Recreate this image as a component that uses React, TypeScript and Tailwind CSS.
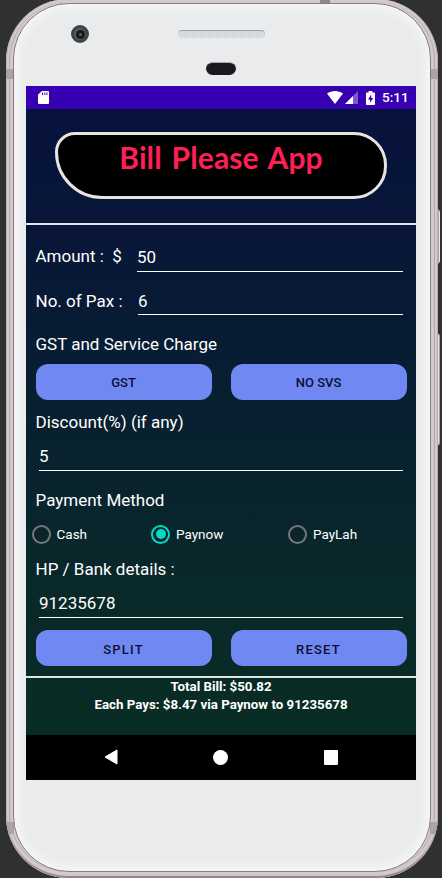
import type { ReactNode } from "react";

function StatusBar() {
  return (
    <div className="flex h-[23px] shrink-0 items-center bg-[#3700b3] pl-3 pr-[8px] text-white">
      <svg width="11" height="13" viewBox="0 0 11 13" fill="#fff">
        <path d="M3.8 0H10a1 1 0 0 1 1 1v11a1 1 0 0 1-1 1H1a1 1 0 0 1-1-1V3.8z" />
        <path d="M4.5 1.5v2.6M6.8 1.5v2.6M9 1.5v2.6" stroke="#3700b3" strokeWidth="1" />
      </svg>
      <div className="ml-auto flex items-center">
        <svg width="16" height="13" viewBox="0 0 16 13" fill="#fff">
          <path d="M0 2.6C4.6-.8 11.4-.8 16 2.6L8 13z" />
        </svg>
        <svg width="13" height="13" viewBox="0 0 13 13" className="ml-0.5">
          <path d="M13 0v13H0z" fill="#8058d0" />
          <path d="M8 5v8H0z" fill="#fff" />
        </svg>
        <svg width="9" height="14" viewBox="0 0 9 14" className="ml-2">
          <path d="M2.6 0h3.8v1.5H8.2q.8 0 .8.8v10.900q0 .8-.8.8H.8Q0 14 0 13.200V2.300q0-.8.8-.8h1.800z" fill="#fff" />
          <path d="M5.200 3.500L2 8.400h2v3.400L7.200 7H5.200z" fill="#3700b3" />
        </svg>
        <span className="ml-[7px] mt-px w-[26px] whitespace-nowrap text-[13.5px] font-medium leading-none">5:11</span>
      </div>
    </div>
  );
}

function Label({ children, className = "" }: { children: ReactNode; className?: string }) {
  return <div className={`h-6 whitespace-pre pl-[9.5px] text-[17px] leading-6 ${className}`}>{children}</div>;
}

function PillButton({ children, className = "pt-0.5" }: { children: ReactNode; className?: string }) {
  return (
    <button className={`h-9 w-44 rounded-xl bg-[#7089f2] text-center text-[13px] font-medium text-[#0b1030] ${className}`}>
      {children}
    </button>
  );
}

function Radio({ label, checked = false }: { label: string; checked?: boolean }) {
  return (
    <div className="flex h-5 items-center gap-[6px]">
      <span
        className={`flex size-[19px] items-center justify-center rounded-full border-2 ${
          checked ? "border-[#03dac5]" : "border-[#777779]"
        }`}
      >
        {checked && <span className="size-[10px] rounded-full bg-[#03dac5]" />}
      </span>
      <span className="text-[13.5px] leading-5">{label}</span>
    </div>
  );
}

function AppBody() {
  return (
    <div className="flex h-[625.5px] shrink-0 flex-col bg-[linear-gradient(to_bottom,#07123c_0%,#081837_25%,#08202f_50%,#09282a_75%,#092d24_100%)] text-white">
      <div className="h-[114px] shrink-0 pl-[29px] pt-[23px]">
        <div className="flex h-[67px] w-[332px] justify-center rounded-bl-[47px] rounded-br-[33px] rounded-tl-[20px] rounded-tr-[33px] border-[3px] border-[#e6e5e2] bg-black pt-[2px]">
          <h1 className="whitespace-nowrap font-['Lato'] text-[30px] font-bold leading-10 tracking-[0.1px] text-[#ff1f57] [word-spacing:2.5px]">
            Bill Please App
          </h1>
        </div>
      </div>
      <div className="h-0.5 shrink-0 bg-[#e4e3f0]" />

      <div className="mt-[19px] flex h-[28px] shrink-0">
        <Label className="w-[111px]">{"Amount :  $"}</Label>
        <div className="w-[266px] border-b border-white pt-px text-[17px] leading-[25px]">50</div>
      </div>
      <div className="mt-[17px] flex h-[26px] shrink-0">
        <Label className="w-[112px]">No. of Pax :</Label>
        <div className="w-[265px] border-b border-white text-[17px] leading-[25px]">6</div>
      </div>
      <Label className="mt-[17px]">GST and Service Charge</Label>
      <div className="mt-2 flex shrink-0 gap-[19px] pl-[9.5px]">
        <PillButton>GST</PillButton>
        <PillButton>NO SVS</PillButton>
      </div>
      <Label className="mt-[10px]">Discount(%) (if any)</Label>
      <div className="ml-[13px] mt-[10px] h-[27px] w-[364px] shrink-0 border-b border-white text-[17px] leading-[25px]">5</div>
      <Label className="mt-[17px]">Payment Method</Label>
      <div className="mt-3 grid shrink-0 grid-cols-[119.5px_137px_1fr] pl-[5.5px]">
        <Radio label="Cash" />
        <Radio label="Paynow" checked />
        <Radio label="PayLah" />
      </div>
      <Label className="mt-[13px]">HP / Bank details :</Label>
      <div className="ml-[13px] mt-[10px] h-[27px] w-[364px] shrink-0 border-b border-white text-[17px] leading-6">91235678</div>
      <div className="mt-3 flex shrink-0 gap-[19px] pl-[9.5px]">
        <PillButton className="pt-1 tracking-[1.2px]">SPLIT</PillButton>
        <PillButton className="pt-1 tracking-[1.2px]">RESET</PillButton>
      </div>
      <div className="mt-[10px] h-0.5 shrink-0 bg-[#dfe5e3]" />
      <div className="text-center text-[13.3px] font-bold leading-[18px]">
        <p>Total Bill: $50.82</p>
        <p>Each Pays: $8.47 via Paynow to 91235678</p>
      </div>
    </div>
  );
}

function NavBar() {
  return (
    <div className="flex h-[45.5px] shrink-0 items-center bg-black">
      <svg width="14" height="16" viewBox="0 0 14 16" className="ml-[78px]">
        <path d="M13 1v14L1 8z" fill="#fff" stroke="#fff" strokeLinejoin="round" />
      </svg>
      <div className="ml-[95px] size-[15px] rounded-full bg-white" />
      <div className="ml-[96px] h-[15px] w-[14px] rounded-[1px] bg-white" />
    </div>
  );
}

export default function App() {
  return (
    <div className="relative h-[878px] w-[442px] overflow-hidden bg-[#2f3032] font-['Roboto',sans-serif]">
      <div className="absolute left-[436px] top-[209px] h-[55px] w-1 rounded-r-sm border-r border-[#e9e9e9] bg-[#a5a8a8]" />
      <div className="absolute left-[436px] top-[333px] h-[113px] w-1 rounded-r-sm border-r border-[#9fa2a2] bg-[#e2e2e2]" />
      <div className="relative ml-[6px] h-[879px] w-[432px] -translate-y-px overflow-hidden rounded-[62px] bg-[#d3cacd] p-[3px] shadow-[inset_1px_0_0_#b8afb2,inset_-1px_0_0_#b5acaf,inset_0_-2px_1px_#8f8588]">
        <div className="absolute left-0 top-[70px] h-[10px] w-2 bg-[#a9a2a4]" />
        <div className="absolute right-0 top-[70px] h-[10px] w-2 bg-[#a9a2a4]" />
        <div className="absolute left-0 top-[823px] h-3 w-2 bg-[#a9a2a4]" />
        <div className="absolute right-0 top-[823px] h-3 w-2 bg-[#a9a2a4]" />
        <div className="absolute left-[314px] top-0 h-1 w-[10px] bg-[#8f8789]" />
        <div className="relative h-[870px] w-[426px] rounded-[59px] border-x border-[#b1a8ab] px-[3px] pt-px">
          <div className="h-[869px] w-[418px] rounded-[56px] border border-[#857c80] bg-[#eaebec] px-[12px] shadow-[inset_0_0_10px_4px_#f7f7f9]">
            <header className="relative h-[82px]">
              <div className="absolute left-[45px] top-[21px] flex size-[18px] items-center justify-center rounded-full border-[3px] border-[#3f4246] bg-[#575b5f]">
                <div className="flex size-[9px] items-center justify-center rounded-full bg-[#15191b]">
                  <div className="size-[3px] rounded-full bg-[#60622d]" />
                </div>
              </div>
              <div className="absolute left-[152px] top-[26px] h-2 w-[87px] rounded-full border-t border-[#999da5] bg-[repeating-linear-gradient(90deg,#d1d4d8_0_1px,#dddfe2_1px_2px)]" />
              <div className="absolute left-[180px] top-[58px] h-[13px] w-[30px] rounded-full border-t border-[#a8a9aa] bg-[#181a1d]" />
            </header>
            <main className="flex h-[694px] w-[390px] flex-col">
              <StatusBar />
              <AppBody />
              <NavBar />
            </main>
          </div>
        </div>
      </div>
    </div>
  );
}
